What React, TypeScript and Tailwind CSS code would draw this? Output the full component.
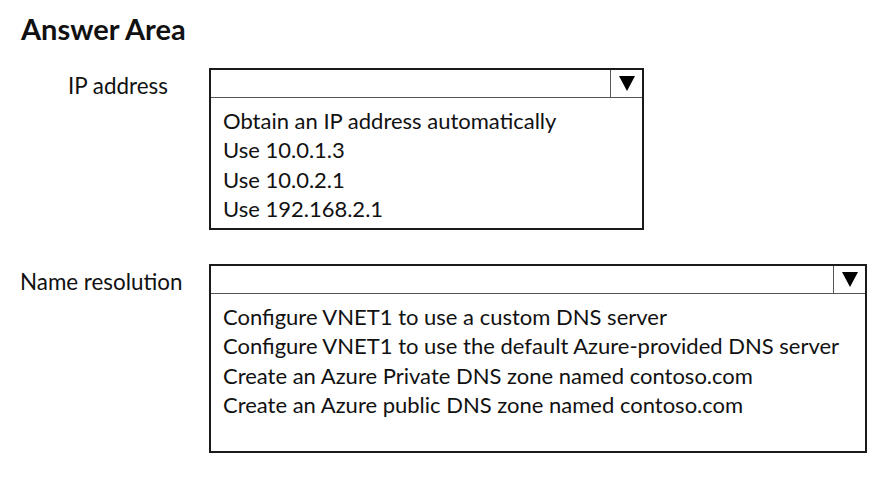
import React from "react";

function Arrow() {
  return (
    <svg width="16" height="15" viewBox="0 0 16 15">
      <polygon points="0,0 16,0 8,15" fill="#000" />
    </svg>
  );
}

function Dropdown({
  width,
  height,
  options,
}: {
  width: string;
  height: string;
  options: string[];
}) {
  return (
    <div className={`${width} ${height} border-2 border-[#1a1a1a] flex flex-col shrink-0`}>
      <div className="h-[28px] border-b border-[#555] flex justify-end shrink-0">
        <div className="w-[32px] border-l border-[#555] flex items-center justify-center">
          <Arrow />
        </div>
      </div>
      <div className="pt-[8px] pl-[12px] flex flex-col">
        {options.map((o) => (
          <div key={o} className="leading-[29.3px] text-[22px] whitespace-nowrap">
            {o}
          </div>
        ))}
      </div>
    </div>
  );
}

export default function App() {
  return (
    <div className="w-[886px] h-[477px] bg-white text-[#111] font-['Lato',_sans-serif] overflow-hidden">
      <div className="pt-[13px] pl-[21px] text-[29px] leading-[32px] font-bold">Answer Area</div>
      <div className="mt-[23px] flex items-start">
        <div className="w-[209px] shrink-0 pl-[68px] mt-[3px] text-[22.4px] leading-[29px]">IP address</div>
        <Dropdown
          width="w-[435px]"
          height="h-[162px]"
          options={[
            "Obtain an IP address automatically",
            "Use 10.0.1.3",
            "Use 10.0.2.1",
            "Use 192.168.2.1",
          ]}
        />
      </div>
      <div className="mt-[34px] flex items-start">
        <div className="w-[209px] shrink-0 pl-[20px] mt-[3px] text-[22.4px] leading-[29px]">Name resolution</div>
        <Dropdown
          width="w-[658px]"
          height="h-[189px]"
          options={[
            "Configure VNET1 to use a custom DNS server",
            "Configure VNET1 to use the default Azure-provided DNS server",
            "Create an Azure Private DNS zone named contoso.com",
            "Create an Azure public DNS zone named contoso.com",
          ]}
        />
      </div>
    </div>
  );
}
